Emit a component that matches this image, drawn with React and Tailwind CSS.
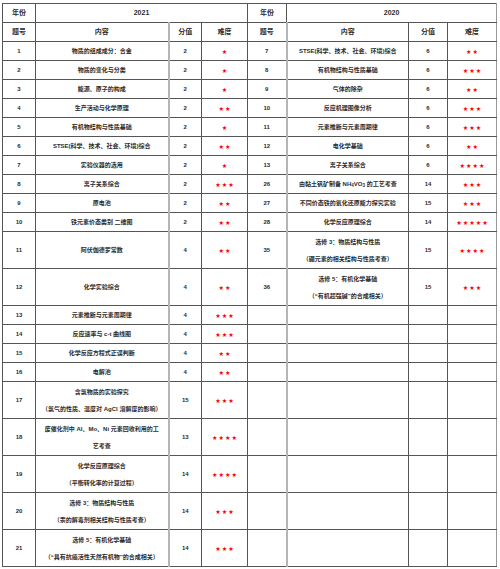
import React from 'react';

// left block: 2021, right block: 2020
const left = [
  { n: 1, c: ['物质的组成成分：合金'], s: 2, d: 1 },
  { n: 2, c: ['物质的变化与分类'], s: 2, d: 1 },
  { n: 3, c: ['能源、原子的构成'], s: 2, d: 1 },
  { n: 4, c: ['生产活动与化学原理'], s: 2, d: 2 },
  { n: 5, c: ['有机物结构与性质基础'], s: 2, d: 1 },
  { n: 6, c: ['STSE(科学、技术、社会、环境)综合'], s: 2, d: 2 },
  { n: 7, c: ['实验仪器的选用'], s: 2, d: 1 },
  { n: 8, c: ['离子关系综合'], s: 2, d: 3 },
  { n: 9, c: ['原电池'], s: 2, d: 2 },
  { n: 10, c: ['铁元素价态类别 二维图'], s: 2, d: 2 },
  { n: 11, c: ['阿伏伽德罗常数'], s: 4, d: 2 },
  { n: 12, c: ['化学实验综合'], s: 4, d: 2 },
  { n: 13, c: ['元素推断与元素周期律'], s: 4, d: 3 },
  { n: 14, c: ['反应速率与 c-t 曲线图'], s: 4, d: 3 },
  { n: 15, c: ['化学反应方程式正误判断'], s: 4, d: 2 },
  { n: 16, c: ['电解池'], s: 4, d: 2 },
  { n: 17, c: ['含氯物质的实验探究', '（氯气的性质、温度对 AgCl 溶解度的影响）'], s: 15, d: 3 },
  { n: 18, c: ['废催化剂中 Al、Mo、Ni 元素回收利用的工', '艺考查'], s: 13, d: 4 },
  { n: 19, c: ['化学反应原理综合', '（平衡转化率的计算过程）'], s: 14, d: 4 },
  { n: 20, c: ['选修 3：物质结构与性质', '（汞的解毒剂相关结构与性质考查）'], s: 14, d: 3 },
  { n: 21, c: ['选修 5：有机化学基础', '（“具有抗癌活性天然有机物”的合成相关）'], s: 14, d: 3 },
];

const right = [
  { n: 7, c: ['STSE(科学、技术、社会、环境)综合'], s: 6, d: 2 },
  { n: 8, c: ['有机物结构与性质基础'], s: 6, d: 3 },
  { n: 9, c: ['气体的除杂'], s: 6, d: 2 },
  { n: 10, c: ['反应机理图像分析'], s: 6, d: 3 },
  { n: 11, c: ['元素推断与元素周期律'], s: 6, d: 3 },
  { n: 12, c: ['电化学基础'], s: 6, d: 2 },
  { n: 13, c: ['离子关系综合'], s: 6, d: 4 },
  { n: 26, c: ['nh4vo3'], s: 14, d: 3 },
  { n: 27, c: ['不同价态铁的氧化还原能力探究实验'], s: 15, d: 3 },
  { n: 28, c: ['化学反应原理综合'], s: 14, d: 5 },
  { n: 35, c: ['选修 3：物质结构与性质', '（硼元素的相关结构与性质考查）'], s: 15, d: 4 },
  { n: 36, c: ['选修 5：有机化学基础', '（“有机超强碱”的合成相关）'], s: 15, d: 3 },
];

const tall = [10, 11, 16, 17, 18, 19, 20];

const Stars = ({ count }) => (
  <div className="flex justify-center gap-[1.5px] text-[5px] leading-none text-[#ff0000]">
    {Array.from({ length: count }).map((_, i) => (
      <span key={i}>★</span>
    ))}
  </div>
);

const Content = ({ lines }) => {
  if (lines[0] === 'nh4vo3') {
    return (
      <span className="whitespace-nowrap">
        由黏土钒矿制备 NH<sub>4</sub>VO<sub>3</sub> 的工艺考查
      </span>
    );
  }
  return (
    <div className="flex flex-col items-center gap-[11px]">
      {lines.map(l => (
        <span key={l} className="whitespace-nowrap leading-[6px]">{l}</span>
      ))}
    </div>
  );
};

const cell = 'border border-[#555] text-center align-middle p-0';

const Block = ({ row, edge }) => {
  if (!row) {
    return (
      <>
        <td className={cell} />
        <td className={`${cell} border-l-2 border-l-[#b5b5b5]`} />
        <td className={cell} />
        <td className={`${cell} ${edge}`} />
      </>
    );
  }
  return (
    <>
      <td className={cell}>{row.n}</td>
      <td className={`${cell} ${edge === '' ? '' : 'border-l-2 border-l-[#b5b5b5]'}`}>
        <Content lines={row.c} />
      </td>
      <td className={`${cell} ${edge === '' ? 'border-l-2 border-l-[#b5b5b5]' : ''}`}>{row.s}</td>
      <td className={`${cell} ${edge}`}>
        <Stars count={row.d} />
      </td>
    </>
  );
};

export default function App() {
  return (
    <div className="w-[500px] h-[569px] bg-white pt-[3px] pl-[2px]">
      <table
        className="table-fixed border-collapse w-[494px] text-[6px] font-bold text-[#2b2b2b]"
        style={{ fontFamily: '"Liberation Sans", "Noto Sans CJK SC", sans-serif' }}
      >
        <colgroup>
          <col className="w-[33px]" />
          <col className="w-[133px]" />
          <col className="w-[33px]" />
          <col className="w-[46px]" />
          <col className="w-[39px]" />
          <col className="w-[122px]" />
          <col className="w-[39px]" />
          <col className="w-[49px]" />
        </colgroup>
        <tbody>
          <tr className="h-[19px] text-[7px]">
            <td className={cell}>年份</td>
            <td className={cell} colSpan={3}>2021</td>
            <td className={cell}>年份</td>
            <td className={`${cell} border-r-[#999]`} colSpan={3}>2020</td>
          </tr>
          <tr className="h-[19px] text-[7px]">
            <td className={cell}>题号</td>
            <td className={cell}>内容</td>
            <td className={`${cell} border-l-2 border-l-[#b5b5b5]`}>分值</td>
            <td className={cell}>难度</td>
            <td className={cell}>题号</td>
            <td className={`${cell} border-l-2 border-l-[#b5b5b5]`}>内容</td>
            <td className={cell}>分值</td>
            <td className={`${cell} border-r-[#999]`}>难度</td>
          </tr>
          {left.map((row, i) => (
            <tr key={row.n} className={tall.includes(i) ? 'h-[37px]' : 'h-[19px]'}>
              <Block row={row} edge="" />
              <Block row={right[i]} edge="border-r-[#999]" />
            </tr>
          ))}
        </tbody>
      </table>
    </div>
  );
}
